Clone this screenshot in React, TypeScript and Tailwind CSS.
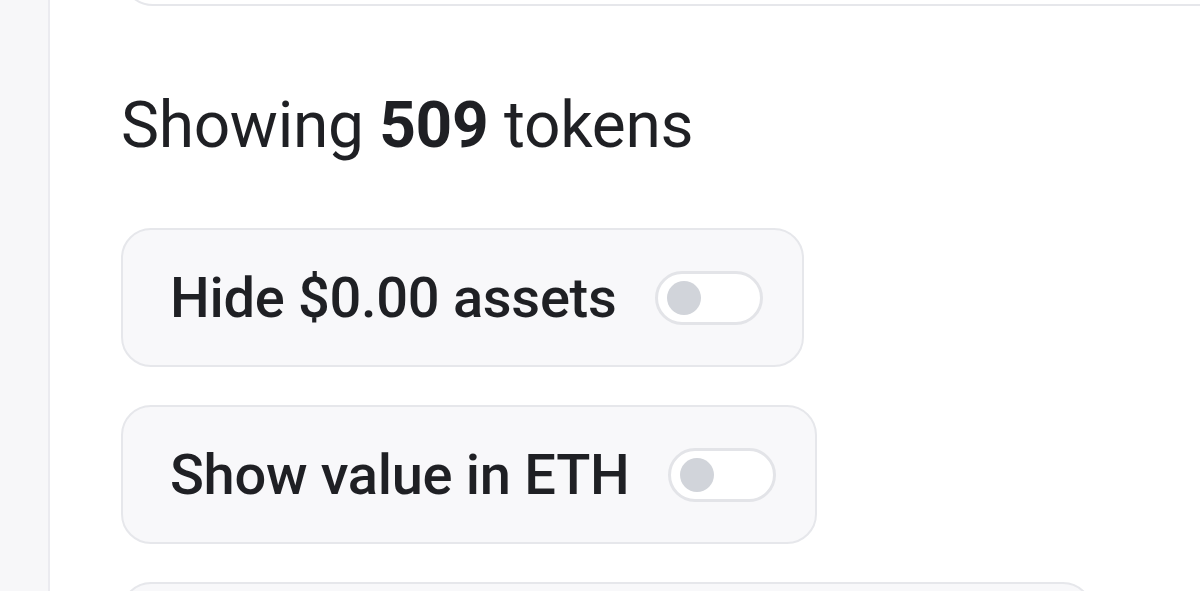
import React from "react";

interface ToggleRowProps {
  label: string;
  enabled?: boolean;
}

function ToggleRow({ label, enabled = false }: ToggleRowProps) {
  return (
    <div className="inline-flex h-[139px] items-center gap-[39px] self-start rounded-[30px] border-2 border-[#e6e7eb] bg-[#f8f8fa] pl-[47px] pr-[39px]">
      <span className="text-[56px] font-medium leading-none tracking-[-0.3px] text-[#1f2024]">
        {label}
      </span>
      <button
        type="button"
        aria-pressed={enabled}
        className="flex h-[54px] w-[108px] items-center rounded-full border-[3px] border-[#e3e4e8] bg-white pl-[9px]"
      >
        <span className="block h-[34px] w-[34px] rounded-full bg-[#d1d4da]" />
      </button>
    </div>
  );
}

export default function App() {
  return (
    <div
      className="flex h-[591px] w-[1200px] overflow-hidden bg-white"
      style={{ fontFamily: "Roboto, 'Liberation Sans', sans-serif" }}
    >
      <div className="w-[50px] shrink-0 border-r-2 border-[#ebebf0] bg-[#f7f7f9]" />

      <div className="flex min-w-0 flex-1 flex-col pl-[71px]">
        {/* bottom of the previous card */}
        <div className="-mt-[94px] h-[100px] w-[1150px] shrink-0 rounded-[32px] border-2 border-[#e6e7eb] bg-white" />

        <div className="mt-[82px] text-[64px] leading-[75px] tracking-[-0.3px] text-[#1f2024]">
          Showing <span className="font-bold">509</span> tokens
        </div>

        <div className="mt-[65px] flex flex-col gap-[38px]">
          <ToggleRow label="Hide $0.00 assets" />
          <ToggleRow label="Show value in ETH" />
          <div className="h-[139px] w-[972px] shrink-0 rounded-[30px] border-2 border-[#e6e7eb] bg-[#f8f8fa]" />
        </div>
      </div>
    </div>
  );
}
